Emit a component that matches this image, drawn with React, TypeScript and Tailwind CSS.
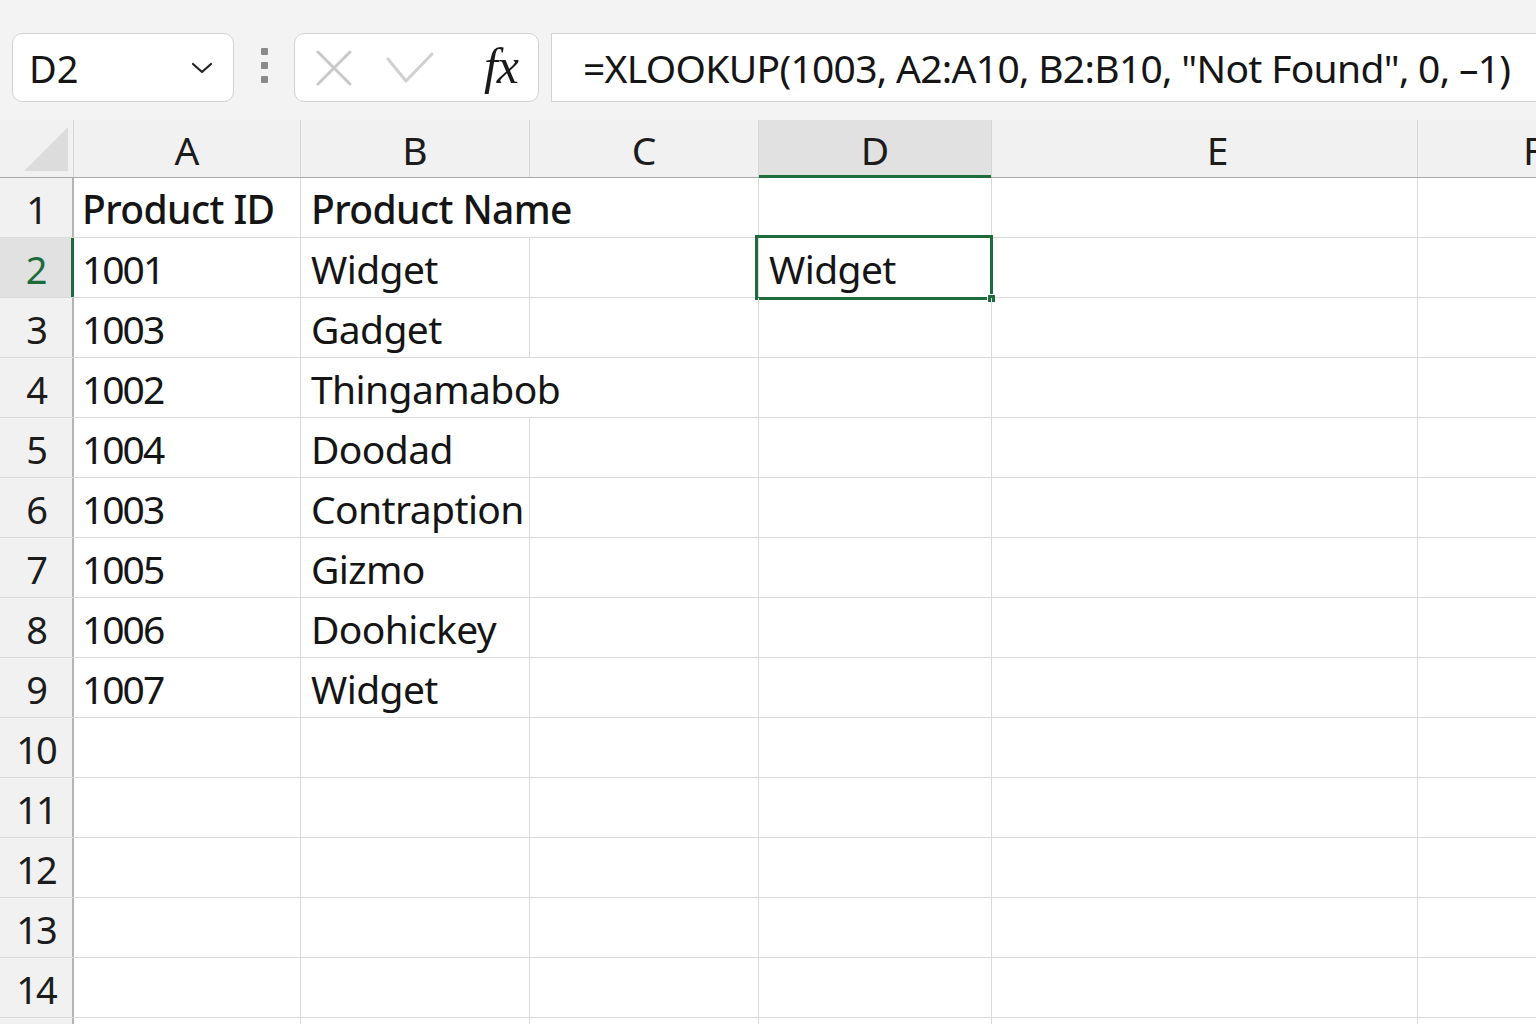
import React from "react";

const cols = [
  { key: "A", w: "w-[227px]" },
  { key: "B", w: "w-[229px]" },
  { key: "C", w: "w-[229px]" },
  { key: "D", w: "w-[233px]" },
  { key: "E", w: "w-[426px]" },
  { key: "F", w: "w-[200px]" },
];

const data: Record<number, string[]> = {
  1: ["Product ID", "Product Name"],
  2: ["1001", "Widget"],
  3: ["1003", "Gadget"],
  4: ["1002", "Thingamabob"],
  5: ["1004", "Doodad"],
  6: ["1003", "Contraption"],
  7: ["1005", "Gizmo"],
  8: ["1006", "Doohickey"],
  9: ["1007", "Widget"],
};

const overflowRows = [1, 4];

function Cell({ row, ci }: { row: number; ci: number }) {
  const col = cols[ci];
  const vals = data[row] || [];
  let text = "";
  if (ci === 0 || ci === 1) text = vals[ci] || "";
  if (row === 2 && col.key === "D") text = "Widget";
  const hideRight = ci === 1 && overflowRows.includes(row);
  const header = row === 1;
  const numeric = ci === 0 && !header;
  return (
    <div
      className={`${col.w} shrink-0 h-full relative flex items-center pt-[2px] border-r ${
        hideRight ? "border-r-transparent z-10" : "border-r-[#dadada]"
      } ${col.key === "A" ? "pl-[8px]" : ""} ${col.key === "B" ? "pl-[10px]" : ""} ${col.key === "D" ? "pl-[10px]" : ""}`}
    >
      {text && (
        <span
          className={`whitespace-nowrap text-[39px] leading-none text-[#151515] ${
            numeric ? "tracking-[-2px]" : "tracking-[-0.6px]"
          } ${header ? "font-medium" : ""}`}
        >
          {text}
        </span>
      )}
      {row === 2 && col.key === "D" && (
        <div className="absolute left-[-4px] top-[-3px] right-[-2px] bottom-[-3px] border-[3px] border-[#1e6b3c] pointer-events-none">
          <div className="absolute right-[-6px] bottom-[-6px] w-[9px] h-[9px] bg-[#1e6b3c] border border-white" />
        </div>
      )}
    </div>
  );
}

export default function App() {
  const rows = Array.from({ length: 15 }, (_, i) => i + 1);
  return (
    <div className="w-[1536px] h-[1024px] overflow-hidden bg-white font-['Noto_Sans',_sans-serif] text-[#151515]">
      {/* Toolbar */}
      <div className="h-[120px] bg-[#f3f3f3] flex items-start pt-[33px] pl-[12px] overflow-hidden">
        <div className="w-[222px] h-[69px] shrink-0 rounded-[10px] border border-[#d2d2d2] bg-white flex items-center justify-between pl-[16px] pr-[20px]">
          <span className="text-[38px] leading-none">D2</span>
          <svg width="22" height="14" viewBox="0 0 22 14">
            <path d="M2 3 L11 11 L20 3" fill="none" stroke="#222" strokeWidth="2.2" strokeLinecap="round" strokeLinejoin="round" />
          </svg>
        </div>
        <div className="w-[60px] h-[69px] shrink-0 flex flex-col items-center justify-center gap-[7px] pb-[4px]">
          <div className="w-[7px] h-[7px] bg-[#8a8a8a] rounded-[1px]" />
          <div className="w-[7px] h-[7px] bg-[#8a8a8a] rounded-[1px]" />
          <div className="w-[7px] h-[7px] bg-[#8a8a8a] rounded-[1px]" />
        </div>
        <div className="w-[245px] h-[69px] shrink-0 rounded-[10px] border border-[#d2d2d2] bg-white flex items-center pl-[21px] pr-[20px]">
          <svg width="36" height="36" viewBox="0 0 36 36" className="shrink-0">
            <path d="M2 2 L34 34 M34 2 L2 34" stroke="#c8c8c8" strokeWidth="3" strokeLinecap="round" />
          </svg>
          <svg width="50" height="34" viewBox="0 0 50 34" className="shrink-0 ml-[33px]">
            <path d="M3 8 L21 30 L47 3" fill="none" stroke="#d0d0d0" strokeWidth="3" strokeLinecap="round" strokeLinejoin="round" />
          </svg>
          <span className="ml-auto font-['Liberation_Serif',_serif] italic text-[50px] leading-none text-[#1a1a1a] -mt-[4px] tracking-[-1px]">
            fx
          </span>
        </div>
        <div className="ml-[12px] w-[1100px] h-[69px] shrink-0 border border-[#d2d2d2] bg-white flex items-center pl-[31px]">
          <span className="text-[39px] leading-none tracking-[-0.7px] whitespace-nowrap text-[#151515]">
            =XLOOKUP(1003, A2:A10, B2:B10, "Not Found", 0, –1)
          </span>
        </div>
      </div>

      {/* Column headers */}
      <div className="flex h-[58px] bg-[#f1f1f1] border-b border-b-[#a9a9a9]">
        <div className="w-[74px] shrink-0 h-full border-r border-r-[#d6d6d6] relative">
          <svg width="44" height="44" viewBox="0 0 44 44" className="absolute left-[24px] top-[7px]">
            <polygon points="44,0 44,44 0,44" fill="#dcdcdc" />
          </svg>
        </div>
        {cols.map((c) => (
          <div
            key={c.key}
            className={`${c.w} shrink-0 h-full flex items-center border-r border-r-[#d6d6d6] relative ${
              c.key === "D" ? "bg-[#e1e1e1]" : ""
            } ${c.key === "E" ? "justify-center pl-[26px]" : ""} ${c.key === "F" ? "justify-start pl-[105px]" : ""} ${
              c.key !== "E" && c.key !== "F" ? "justify-center" : ""
            }`}
          >
            <span className="text-[39px] leading-none text-[#1c1c1c] pt-[2px]">{c.key}</span>
            {c.key === "D" && <div className="absolute left-0 right-0 bottom-[-1px] h-[3px] bg-[#1e6b3c]" />}
          </div>
        ))}
      </div>

      {/* Rows */}
      {rows.map((r) => (
        <div key={r} className="flex h-[60px] border-b border-b-[#dadada]">
          <div
            className={`w-[74px] shrink-0 h-full flex items-center justify-center pt-[2px] ${
              r === 2
                ? "bg-[#e1e1e1] border-r-[3px] border-r-[#1e6b3c] text-[#1e6b3c]"
                : "bg-[#f1f1f1] border-r-2 border-r-[#b4b4b4] text-[#1c1c1c]"
            }`}
          >
            {r <= 14 && <span className="text-[38px] leading-none tracking-[-2px]">{r}</span>}
          </div>
          {cols.map((c, ci) => (
            <Cell key={c.key} row={r} ci={ci} />
          ))}
        </div>
      ))}
    </div>
  );
}
